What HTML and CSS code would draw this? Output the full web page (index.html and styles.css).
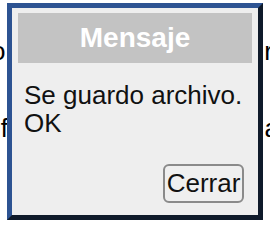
FILE: index.html
```html
<!DOCTYPE html>
<html>
<head>
<meta charset="utf-8">
<link rel="stylesheet" href="styles.css">
</head>
<body>
<div class="page">
  <div class="bg-row row1"><span class="frag-left">o</span><span class="frag-right">r</span></div>
  <div class="bg-row row2"><span class="frag-left">if</span><span class="frag-right">a</span></div>
</div>
<div class="dialog">
  <div class="dialog-header">Mensaje</div>
  <div class="dialog-body">Se guardo archivo.<br>OK</div>
  <div class="dialog-footer"><button class="btn">Cerrar</button></div>
</div>
</body>
</html>
```
FILE: styles.css
```css
html, body {
  margin: 0;
  padding: 0;
  background: #ffffff;
  overflow: hidden;
  width: 270px;
  height: 228px;
  font-family: "Liberation Sans", Arial, sans-serif;
}
.page {
  padding-top: 37px;
  color: #000;
  font-size: 26px;
  line-height: 29px;
}
.bg-row {
  display: flex;
  justify-content: space-between;
  white-space: nowrap;
}
.row2 {
  margin-top: 48px;
}
.frag-left {
  margin-left: -9px;
}
.row2 .frag-left {
  margin-left: -5px;
}
.frag-right {
  margin-right: -3px;
}
.row2 .frag-right {
  margin-right: -9px;
}
.dialog {
  position: absolute;
  left: 7px;
  top: 3px;
  width: 256px;
  height: 217px;
  box-sizing: border-box;
  border-style: solid;
  border-width: 5px;
  border-color: #2d5392 #0f1a2a #0f1a2a #2d5392;
  background: #eeeeee;
  padding: 5px 6px 12px 6px;
  display: flex;
  flex-direction: column;
}
.dialog-header {
  height: 50px;
  background: #c3c3c3;
  color: #ffffff;
  font-weight: bold;
  font-size: 28px;
  display: flex;
  align-items: center;
  justify-content: center;
}
.dialog-body {
  margin-top: 18px;
  padding-left: 6px;
  font-size: 26px;
  line-height: 28px;
  color: #111;
  white-space: nowrap;
}
.dialog-footer {
  margin-top: auto;
  display: flex;
  justify-content: flex-end;
  padding-right: 8px;
}
.btn {
  font-family: "Liberation Sans", Arial, sans-serif;
  font-size: 26px;
  line-height: 35px;
  color: #111;
  background: #efefef;
  border: 2px solid #8a8a8a;
  border-radius: 6px;
  padding: 0;
  width: 81px;
  height: 39px;
  box-sizing: border-box;
}
```
